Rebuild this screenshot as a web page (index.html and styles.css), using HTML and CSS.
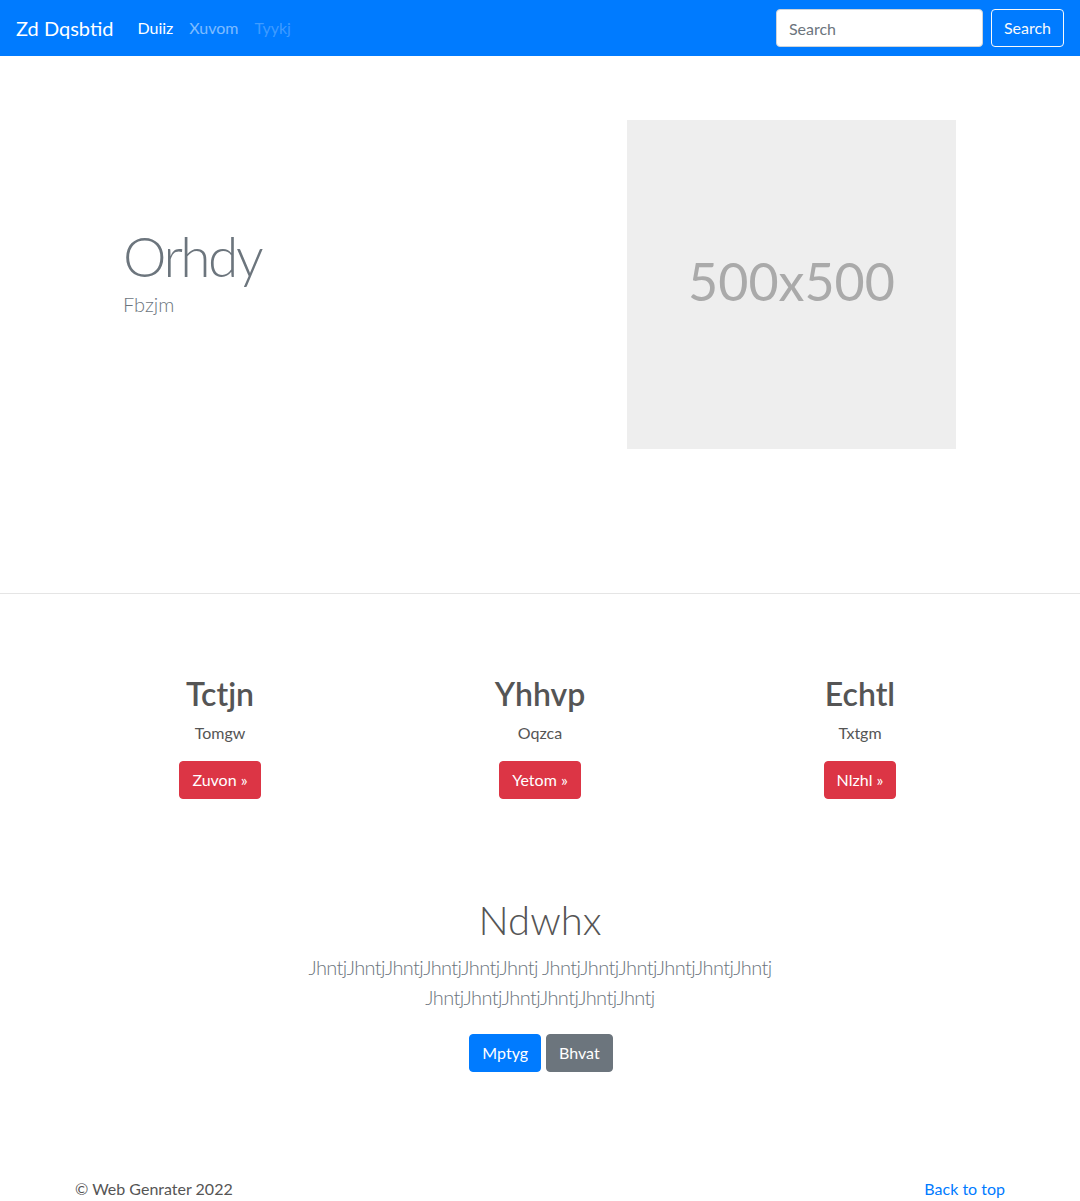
FILE: index.html
```html
<!DOCTYPE html>
<html lang="en">
<head>
<meta charset="utf-8">
<title>Zd Dqsbtid</title>
<link rel="stylesheet" href="styles.css">
</head>
<body>
<nav class="navbar">
  <a class="brand" href="#">Zd Dqsbtid</a>
  <ul class="nav-links">
    <li><a class="nav-link active" href="#">Duiiz</a></li>
    <li><a class="nav-link" href="#">Xuvom</a></li>
    <li><a class="nav-link disabled" href="#">Tyykj</a></li>
  </ul>
  <form class="search-form">
    <input class="search-input" type="text" placeholder="Search">
    <button class="btn btn-outline-light" type="button">Search</button>
  </form>
</nav>

<section class="hero">
  <div class="container hero-row">
    <div class="hero-col hero-text">
      <h1 class="hero-title">Orhdy</h1>
      <p class="hero-lead">Fbzjm</p>
    </div>
    <div class="hero-col hero-media">
      <div class="placeholder">500x500</div>
    </div>
  </div>
</section>

<section class="features">
  <div class="container feature-row">
    <div class="feature">
      <h2 class="feature-title">Tctjn</h2>
      <p class="feature-text">Tomgw</p>
      <a class="btn btn-danger" href="#">Zuvon &raquo;</a>
    </div>
    <div class="feature">
      <h2 class="feature-title">Yhhvp</h2>
      <p class="feature-text">Oqzca</p>
      <a class="btn btn-danger" href="#">Yetom &raquo;</a>
    </div>
    <div class="feature">
      <h2 class="feature-title">Echtl</h2>
      <p class="feature-text">Txtgm</p>
      <a class="btn btn-danger" href="#">Nlzhl &raquo;</a>
    </div>
  </div>
</section>

<section class="cta">
  <h1 class="cta-title">Ndwhx</h1>
  <p class="cta-lead">JhntjJhntjJhntjJhntjJhntjJhntj JhntjJhntjJhntjJhntjJhntjJhntj JhntjJhntjJhntjJhntjJhntjJhntj</p>
  <div class="cta-buttons">
    <a class="btn btn-primary" href="#">Mptyg</a>
    <a class="btn btn-secondary" href="#">Bhvat</a>
  </div>
</section>

<footer class="footer container">
  <span class="copy">&copy; Web Genrater 2022</span>
  <a class="back-top" href="#">Back to top</a>
</footer>
</body>
</html>
```

FILE: styles.css
```css
* { box-sizing: border-box; }
body {
  margin: 0;
  font-family: Lato, "Noto Sans", "Liberation Sans", sans-serif;
  font-size: 16px;
  line-height: 1.5;
  color: #212529;
  background: #fff;
}
a { text-decoration: none; }
h1, h2, p { margin: 0; }

.container {
  width: 960px;
  margin: 0 auto;
  padding: 0 15px;
}

/* navbar */
.navbar {
  height: 56px;
  background: #007bff;
  display: flex;
  align-items: center;
  padding: 8px 16px;
}
.brand {
  color: #fff;
  font-size: 20px;
  line-height: 30px;
  padding: 5px 0;
  margin-right: 16px;
}
.nav-links {
  list-style: none;
  margin: 0;
  padding: 0;
  display: flex;
  flex: 1;
}
.nav-link {
  display: block;
  padding: 8px;
  color: rgba(255,255,255,.5);
}
.nav-link.active { color: #fff; }
.nav-link.disabled { color: rgba(255,255,255,.25); }
.search-form { display: flex; align-items: center; }
.search-input {
  width: 207px;
  height: 38px;
  padding: 6px 12px;
  font: inherit;
  font-size: 16px;
  color: #495057;
  border: 1px solid #ced4da;
  border-radius: 4px;
  margin-right: 8px;
  background: #fff;
}
.search-input::placeholder { color: #6c757d; }

.btn {
  display: inline-block;
  font-family: inherit;
  font-size: 16px;
  line-height: 24px;
  padding: 6px 12px;
  border: 1px solid transparent;
  border-radius: 4px;
  color: #fff;
  cursor: pointer;
}
.btn-outline-light { background: transparent; border-color: #f8f9fa; color: #f8f9fa; }
.btn-danger { background: #dc3545; border-color: #dc3545; }
.btn-primary { background: #007bff; border-color: #007bff; }
.btn-secondary { background: #6c757d; border-color: #6c757d; }

/* hero */
.hero {
  padding: 64px 0 144px;
  border-bottom: 1px solid #e5e5e5;
}
.hero-row { display: flex; align-items: center; }
.hero-col { flex: 1; padding: 0 48px; }
.hero-text { padding-bottom: 5px; }
.hero-title {
  font-size: 55px;
  font-weight: 300;
  line-height: 1;
  letter-spacing: -2.5px;
  color: #6c757d;
  margin-bottom: 5px;
}
.hero-lead {
  font-size: 20px;
  font-weight: 300;
  color: #6c757d;
  margin-bottom: 16px;
}
.hero-media { display: flex; justify-content: flex-end; padding-right: 49px; }
.placeholder {
  width: 329px;
  height: 329px;
  background: #eee;
  color: #aaa;
  font-size: 52px;
  padding-bottom: 8px;
  display: flex;
  align-items: center;
  justify-content: center;
}

/* features */
.features { padding-top: 81px; }
.feature-row { display: flex; padding: 0; }
.feature { flex: 1; text-align: center; padding: 0 15px; }
.feature-title {
  font-size: 32px;
  font-weight: 600;
  line-height: 1.2;
  color: #555;
  margin-bottom: 8px;
}
.feature-text { color: #555; margin-bottom: 16px; }

/* cta */
.cta { text-align: center; padding-top: 97px; }
.cta-title {
  font-size: 40px;
  font-weight: 300;
  line-height: 1.2;
  color: #555;
  margin-bottom: 8px;
}
.cta-lead {
  font-size: 20px;
  font-weight: 300;
  letter-spacing: -0.6px;
  color: #6c757d;
  max-width: 480px;
  margin: 0 auto 22px;
}
.cta-buttons { display: flex; justify-content: center; gap: 5px; padding-left: 2px; }
.cta-buttons .btn-primary { height: 38px; }

/* footer */
.footer {
  display: flex;
  justify-content: space-between;
  margin-top: 105px;
  padding-bottom: 16px;
  color: #555;
}
.back-top { color: #007bff; }
```
